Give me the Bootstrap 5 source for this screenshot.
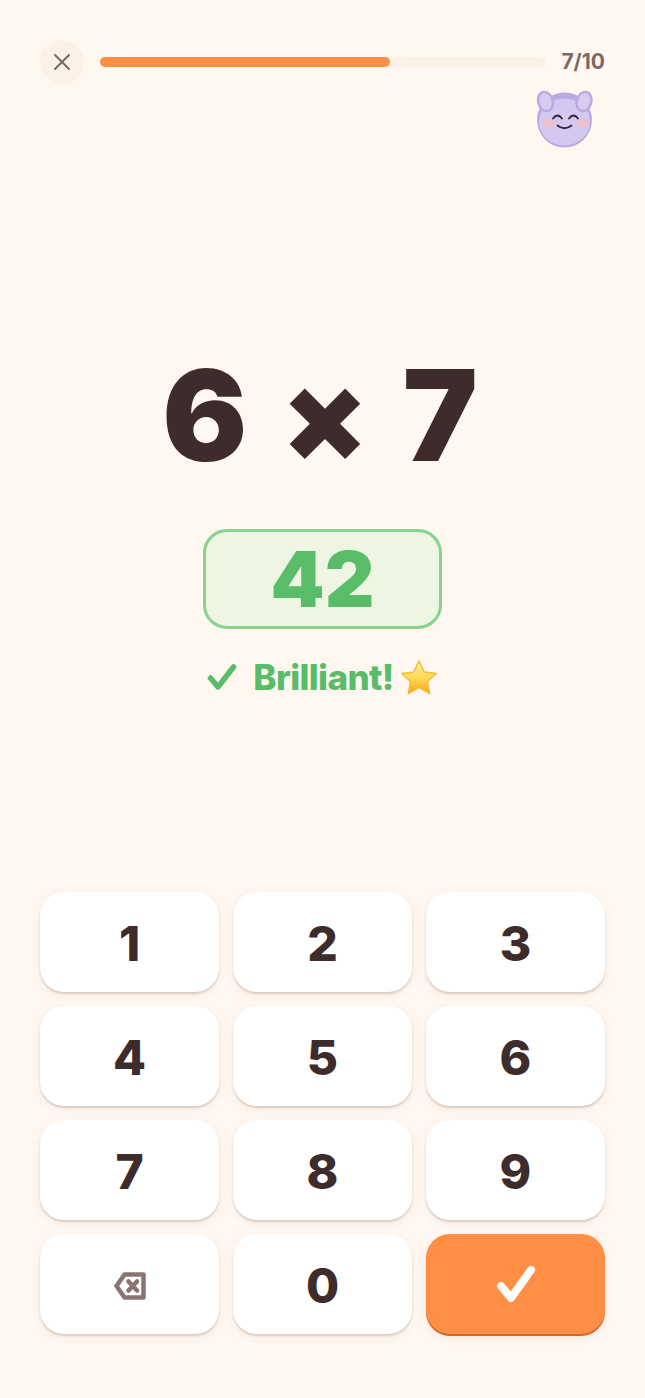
<!DOCTYPE html>
<html lang="en">
<head>
    <meta charset="UTF-8">
    <meta name="viewport" content="width=device-width, initial-scale=1">
    <title>Times tables</title>
    <link rel="stylesheet" href="https://cdn.jsdelivr.net/npm/bootstrap@5.3.0/dist/css/bootstrap.min.css">
    <style>
        html, body { height: 100%; }
        body { background: #fff7f0; font-family: Inter, "Liberation Sans", sans-serif; color: #3e2c2c; }
        .quiz-page { height: 1398px; padding: 40px 40px 64px; }
        .close-btn { width: 44px; height: 44px; border-radius: 50%; background: #fdf1e7; border: 0; padding: 0; }
        .track { height: 10px; background: #fdf1e5; border-radius: 5px; margin: 0 15px 0 16px; }
        .track-fill { height: 100%; background: #ff8f45; border-radius: 5px; }
        .count { font-size: 21px; font-weight: 700; color: #7a6a66; line-height: 44px; }
        .mascot-row { padding-right: 10px; margin-top: 5px; height: 59px; }
        .sum { font-size: 126px; font-weight: 900; line-height: 1; margin-top: 204px; gap: 34px; padding-right: 5px; }
        .answer-box { width: 239px; height: 100px; margin-top: 51px; border: 3px solid #86d48c; border-radius: 24px; background: #eef5e3; color: #58bc68; font-size: 77px; font-weight: 900; line-height: 1; }
        .verdict { margin-top: 26px; color: #58bc68; font-size: 35px; font-weight: 800; line-height: 44px; letter-spacing: -.6px; gap: 8px; }
        .star { margin-left: -2px; }
        .pad { display: grid; grid-template-columns: repeat(3, 179px); grid-auto-rows: 100px; gap: 14px; }
        .key { background: #fff; border: 0; border-radius: 24px; box-shadow: 0 2px 2px #dcccc2, 0 3px 10px rgba(140,100,70,.07); color: #3e2c2c; font-size: 48px; font-weight: 800; line-height: 1; padding: 3px 0 0; }
        .key-ok { background: #ff8f45; box-shadow: 0 2px 0 #cf6a2c, 0 3px 8px rgba(140,100,70,.1); padding: 0; }
    </style>
</head>
<body>

<div class="quiz-page d-flex flex-column">
    <div class="d-flex align-items-center">
        <button class="close-btn d-flex align-items-center justify-content-center flex-shrink-0" aria-label="Close">
            <svg width="18" height="18" viewBox="0 0 18 18"><path d="M2 2l14 14M16 2L2 16" stroke="#7a6a66" stroke-width="2" stroke-linecap="round"/></svg>
        </button>
        <div class="track flex-grow-1">
            <div class="track-fill" style="width: 65%"></div>
        </div>
        <div class="count">7/10</div>
    </div>

    <div class="mascot-row d-flex justify-content-end">
        <svg width="59" height="59" viewBox="0 0 59 59">
            <circle cx="28.500" cy="31" r="27.500" fill="#bbaae2"/>
            <ellipse cx="28.500" cy="33" rx="25.500" ry="23.500" fill="#d3c8f0"/>
            <ellipse cx="9.500" cy="12.500" rx="8.500" ry="11" transform="rotate(-15 9.500 12.500)" fill="#bbaae2"/>
            <ellipse cx="9.500" cy="12.500" rx="6" ry="8.500" transform="rotate(-15 9.500 12.500)" fill="#d6ccf2"/>
            <ellipse cx="48" cy="12.500" rx="8.500" ry="11" transform="rotate(15 48 12.500)" fill="#bbaae2"/>
            <ellipse cx="48" cy="12.500" rx="6" ry="8.500" transform="rotate(15 48 12.500)" fill="#d6ccf2"/>
            <ellipse cx="12" cy="34" rx="5.500" ry="4.500" fill="#efbfcb"/>
            <ellipse cx="47" cy="34" rx="5.500" ry="4.500" fill="#efbfcb"/>
            <path d="M17 29.500q4.500-6 9 0M33 29.500q4.500-6 9 0M21.500 36.500q7 5.500 14 0" fill="none" stroke="#2f2530" stroke-width="1.800" stroke-linecap="round"/>
        </svg>
    </div>

    <div class="sum d-flex justify-content-center align-items-center">
        <span>6</span><span>×</span><span>7</span>
    </div>

    <div class="answer-box align-self-center d-flex align-items-center justify-content-center">42</div>

    <div class="verdict d-flex justify-content-center align-items-center">
        <svg width="30" height="28" viewBox="0 0 30 28" class="me-2"><path d="M3.500 15l7.500 9L26.500 4" fill="none" stroke="#58bc68" stroke-width="5.500" stroke-linecap="round" stroke-linejoin="round"/></svg>
        <span>Brilliant!</span>
        <svg class="star" width="38" height="36" viewBox="0 0 38 36">
            <defs>
                <linearGradient id="starFill" x1="0" y1="0" x2="0" y2="1">
                    <stop offset="0" stop-color="#fff0a8"/>
                    <stop offset=".55" stop-color="#ffd84d"/>
                    <stop offset="1" stop-color="#f7a41e"/>
                </linearGradient>
            </defs>
            <path d="M19 2l5.200 11 12 1.500-8.800 8.200 2.300 11.800L19 28.600 8.300 34.500l2.300-11.800L1.800 14.500l12-1.500z" fill="url(#starFill)" stroke="#f5bb3c" stroke-width="1.500" stroke-linejoin="round"/>
        </svg>
    </div>

    <div class="pad mt-auto">
        <button class="key">1</button>
        <button class="key">2</button>
        <button class="key">3</button>
        <button class="key">4</button>
        <button class="key">5</button>
        <button class="key">6</button>
        <button class="key">7</button>
        <button class="key">8</button>
        <button class="key">9</button>
        <button class="key d-flex align-items-center justify-content-center" aria-label="Delete">
            <svg width="32" height="28" viewBox="0 0 32 28"><path d="M10.500 2.500h19v23h-19L2.500 14z" fill="none" stroke="#8a7472" stroke-width="4.500" stroke-linejoin="round"/><path d="M14.500 9.500l8.500 9M23 9.500l-8.500 9" stroke="#8a7472" stroke-width="4.500" stroke-linecap="round"/></svg>
        </button>
        <button class="key">0</button>
        <button class="key key-ok d-flex align-items-center justify-content-center" aria-label="Check">
            <svg width="40" height="38" viewBox="0 0 40 38"><path d="M5 21l10 12L35 5" fill="none" stroke="#fff" stroke-width="8" stroke-linecap="round" stroke-linejoin="round"/></svg>
        </button>
    </div>
</div>

<script src="https://cdn.jsdelivr.net/npm/bootstrap@5.3.0/dist/js/bootstrap.bundle.min.js"></script>
</body>
</html>
